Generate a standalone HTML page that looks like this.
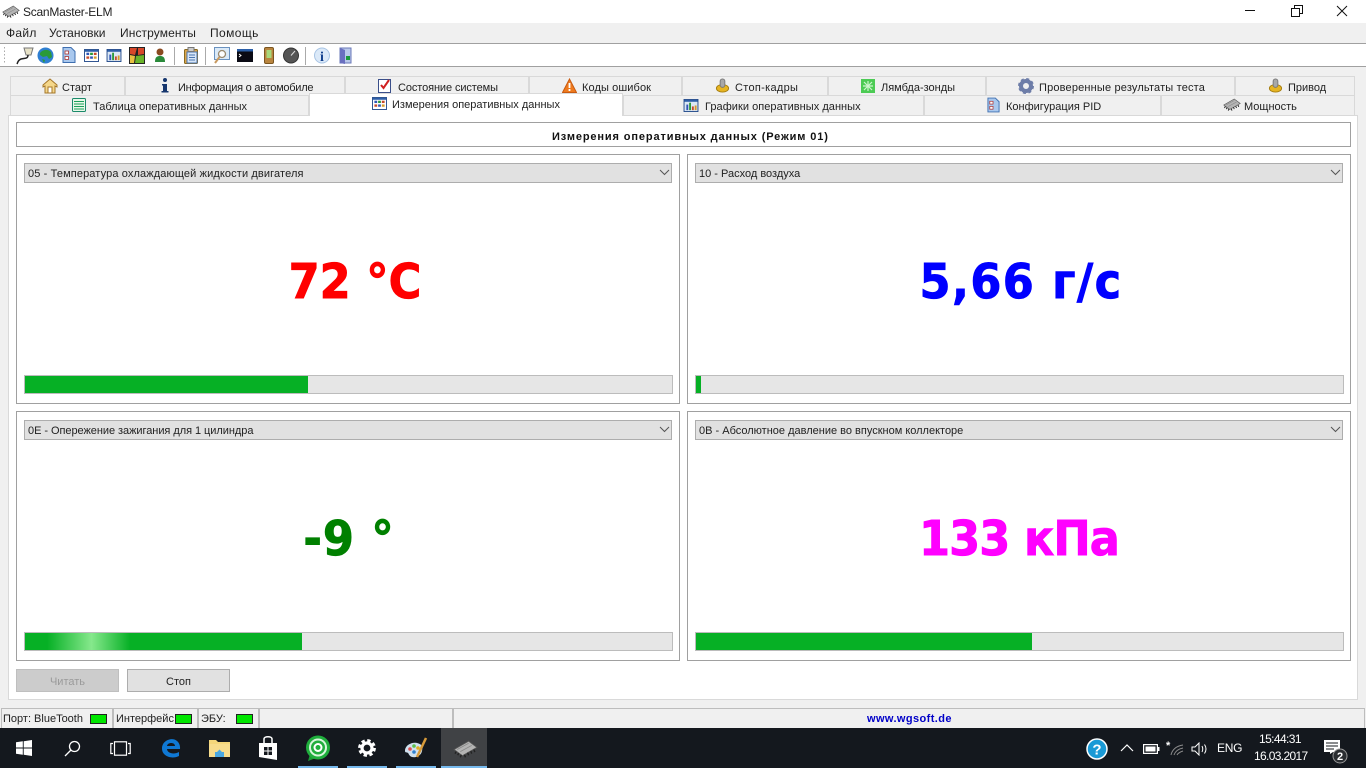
<!DOCTYPE html>
<html lang="ru">
<head>
<meta charset="utf-8">
<title>ScanMaster-ELM</title>
<style>
html,body{margin:0;padding:0;width:1366px;height:768px;overflow:hidden;background:#f0f0f0}
body{position:relative;font-family:"Liberation Sans","DejaVu Sans",sans-serif;font-size:11px;color:#222}
div,span,svg{position:absolute;box-sizing:border-box}
.t{white-space:nowrap;line-height:14px;height:14px}
.tab{background:#f0f0f0;border:1px solid #d9d9d9;border-bottom:none;height:20px}
.panel{background:#fff;border:1px solid #a0a0a0}
.combo{background:#e1e1e1;border:1px solid #adadad;height:20px}
.bar{background:#e6e6e6;border:1px solid #bcbcbc;height:19px}
.fill{background:#06b025;left:0;top:0;height:17px}
.big{font-family:"DejaVu Sans",sans-serif;font-weight:700;font-size:48px;line-height:56px;height:56px;width:300px;white-space:nowrap;text-align:center;transform:scaleX(.93);transform-origin:center;text-rendering:geometricPrecision;-webkit-text-stroke:.9px currentColor}
.sb{border:1px solid #bdbdbd;border-bottom:none;height:20px;top:708px}
.led{background:#00e600;border:1px solid #222;width:17px;height:10px;top:714px}
.ts{height:2px;top:766px;background:#76b9ed}
</style>
</head>
<body>
<svg width="0" height="0" style="left:0;top:0">
<defs>
<symbol id="chip" viewBox="0 0 24 18"><path d="M1 9 15 1l8 6-14 8z" fill="#b4b4b4" stroke="#555" stroke-width=".8"/><path d="M3 11l-1 2M5.500 12.500l-1 2M8 14l-1 2.500M11 14l1 2.500M14 12l1 2.500M17 10.500l1 2.500M20 9l1 2.500" stroke="#222" stroke-width="1.300" fill="none"/><path d="M4 9 15 3M7 11l11-6" stroke="#8a8a8a" stroke-width=".8"/></symbol>
<symbol id="grid" viewBox="0 0 16 14"><rect x=".5" y=".5" width="15" height="13" fill="#fff" stroke="#224a8a"/><rect x="1" y="1" width="14" height="2" fill="#2d5ea8"/><rect x="2.500" y="4" width="3" height="2.500" fill="#2f55b5"/><rect x="6.500" y="4" width="3" height="2.500" fill="#2c9a3a"/><rect x="10.500" y="4" width="3" height="2.500" fill="#c64a2a"/><rect x="2.500" y="8" width="3" height="2.500" fill="#c64a2a"/><rect x="6.500" y="8" width="3" height="2.500" fill="#2f55b5"/><rect x="10.500" y="8" width="3" height="2.500" fill="#d69a2a"/></symbol>
<symbol id="chart" viewBox="0 0 16 14"><rect x=".5" y=".5" width="15" height="13" fill="#dbe7f5" stroke="#224a8a"/><rect x="1" y="1" width="14" height="2" fill="#2d5ea8"/><rect x="3" y="6" width="2" height="6" fill="#2f55b5"/><rect x="6" y="4" width="2" height="8" fill="#2c9a3a"/><rect x="9" y="8" width="2" height="4" fill="#c64a2a"/><rect x="12" y="7" width="2" height="5" fill="#d69a2a"/></symbol>
<symbol id="doc" viewBox="0 0 14 16"><path d="M1 .5h8l4 4v11H1z" fill="#a9c8ee" stroke="#3f6fb0"/><rect x="3" y="4" width="3.500" height="3" fill="#fff" stroke="#a33" stroke-width=".8"/><rect x="3" y="9.500" width="3.500" height="3" fill="#fff" stroke="#a33" stroke-width=".8"/></symbol>
<symbol id="stick" viewBox="0 0 16 16"><ellipse cx="8" cy="11" rx="6.500" ry="4" fill="#e6b422" stroke="#a57d10"/><rect x="5.500" y="1" width="5" height="9" rx="2.500" fill="#a8a8a8" stroke="#777"/></symbol>
</defs>
</svg>

<!-- title bar -->
<div style="left:0;top:0;width:1366px;height:23px;background:#fff"></div>
<svg style="left:2px;top:5px" width="18" height="14"><use href="#chip"/></svg>
<div class="t" style="left:23px;top:5px;font-size:12px;letter-spacing:-.25px">ScanMaster-ELM</div>
<svg style="left:1240px;top:0" width="126" height="23" fill="none" stroke="#111" stroke-width="1"><path d="M5 10.500h10"/><path d="M51.500 8.500h8v8h-8zM54.500 8.500v-3h8v8h-3"/><path d="M97 6l10 10M107 6 97 16"/></svg>

<!-- menu -->
<div class="t" style="left:6px;top:26px;font-size:12px;letter-spacing:.3px">Файл</div>
<div class="t" style="left:49px;top:26px;font-size:12px;letter-spacing:0">Установки</div>
<div class="t" style="left:120px;top:26px;font-size:12px;letter-spacing:.1px">Инструменты</div>
<div class="t" style="left:210px;top:26px;font-size:12px;letter-spacing:.4px">Помощь</div>

<!-- toolbar -->
<div style="left:0;top:43px;width:1366px;height:24px;background:#fff;border-top:1px solid #a0a0a0;border-bottom:1px solid #a0a0a0"></div>
<svg style="left:3px;top:46px" width="3" height="19"><path d="M1.500 1v17" stroke="#aaa" stroke-dasharray="1.500 2"/></svg>
<svg style="left:14px;top:47px" width="20" height="18"><path d="M10 1h9l-2 7h-5z" fill="#e8e3c8" stroke="#777"/><path d="M14 8c0 4-3 3-7 4-3 1-3 3-4 5" fill="none" stroke="#222" stroke-width="1.500"/></svg>
<svg style="left:37px;top:47px" width="17" height="17"><circle cx="8.500" cy="8.500" r="8" fill="#2f7fd1"/><path d="M3 6c3-4 8-4 11-1l1 5-3 2-2-3-4 1-3-2zM5 12l3 1-1 3z" fill="#2a9a3a"/></svg>
<svg style="left:62px;top:47px" width="14" height="16"><use href="#doc"/></svg>
<svg style="left:84px;top:49px" width="15" height="13"><use href="#grid"/></svg>
<svg style="left:106px;top:49px" width="16" height="13"><use href="#chart"/></svg>
<svg style="left:129px;top:47px" width="16" height="17"><rect width="16" height="17" fill="#222"/><path d="M1 1h7l-2 7-5-1zM9 1h6v6l-6 1z" fill="#d8472a"/><path d="M1 8l5 1-1 7H1z" fill="#e8c040"/><path d="M7 9l8-1v8H6z" fill="#6ab42a"/></svg>
<svg style="left:154px;top:48px" width="12" height="15"><circle cx="6" cy="4" r="3.500" fill="#8a4a20"/><path d="M1 14c0-5 2-6 5-6s5 1 5 6z" fill="#2a8a3a"/></svg>
<div style="left:174px;top:47px;width:1px;height:18px;background:#aaa"></div>
<svg style="left:184px;top:47px" width="14" height="17"><rect x=".5" y="2.500" width="13" height="14" rx="1" fill="#dca64a" stroke="#8a6a20"/><rect x="3" y="5" width="10" height="11" fill="#d8e6f8" stroke="#4a76b0"/><rect x="4" y=".5" width="6" height="4" fill="#ccc" stroke="#777"/><path d="M5 8h6M5 10.500h6M5 13h6" stroke="#4a76b0"/></svg>
<div style="left:205px;top:47px;width:1px;height:18px;background:#aaa"></div>
<svg style="left:214px;top:47px" width="16" height="18"><rect x=".5" y=".5" width="15" height="12" fill="#dbeaf8" stroke="#6a92c0"/><circle cx="8" cy="7" r="3.500" fill="#fff" stroke="#9a8a70" stroke-width="1.300"/><path d="M5.500 10 1 16" stroke="#c89a60" stroke-width="2"/></svg>
<svg style="left:237px;top:49px" width="16" height="13"><rect width="16" height="13" fill="#0a0a14"/><rect width="16" height="2.500" fill="#2a5ea8"/><path d="M2 5l2 1.500L2 8" stroke="#fff" fill="none"/></svg>
<svg style="left:264px;top:47px" width="10" height="17"><rect x=".5" y=".5" width="9" height="16" rx="1.500" fill="#b9853f" stroke="#7a5520"/><rect x="2.500" y="3" width="5" height="8" fill="#a8d87a"/></svg>
<svg style="left:283px;top:47px" width="16" height="17"><circle cx="8" cy="8.500" r="7.500" fill="#555" stroke="#333"/><path d="M8 8.500 12 4" stroke="#ddd"/></svg>
<div style="left:305px;top:47px;width:1px;height:18px;background:#aaa"></div>
<svg style="left:314px;top:47px" width="16" height="17"><circle cx="8" cy="8.500" r="7.500" fill="#dbe9f8" stroke="#a8c4e4"/><text x="8" y="14" font-family="Liberation Serif,serif" font-weight="700" font-size="14" text-anchor="middle" fill="#13418f">i</text></svg>
<svg style="left:339px;top:47px" width="13" height="17"><rect x="1" y="1" width="11" height="15" fill="#b9c8ea" stroke="#6a78b8"/><path d="M1 1l5 2v14l-5-1z" fill="#6a70c0"/><rect x="7" y="9" width="4" height="4" fill="#1a9a3a"/></svg>

<!-- tabs -->
<div class="tab" style="left:10px;top:76px;width:115px"></div>
<div class="tab" style="left:125px;top:76px;width:220px"></div>
<div class="tab" style="left:345px;top:76px;width:184px"></div>
<div class="tab" style="left:529px;top:76px;width:153px"></div>
<div class="tab" style="left:682px;top:76px;width:146px"></div>
<div class="tab" style="left:828px;top:76px;width:158px"></div>
<div class="tab" style="left:986px;top:76px;width:249px"></div>
<div class="tab" style="left:1235px;top:76px;width:120px"></div>
<div class="tab" style="left:10px;top:95px;width:299px"></div>
<div class="tab" style="left:623px;top:95px;width:301px"></div>
<div class="tab" style="left:924px;top:95px;width:237px"></div>
<div class="tab" style="left:1161px;top:95px;width:194px"></div>
<!-- page -->
<div style="left:8px;top:115px;width:1350px;height:585px;background:#fff;border:1px solid #d9d9d9"></div>
<div style="left:309px;top:93px;width:314px;height:23px;background:#fff;border:1px solid #d9d9d9;border-bottom:none"></div>

<!-- tab labels -->
<svg style="left:42px;top:78px" width="16" height="16"><path d="M8 1 1 7v2l2-1v7h10V8l2 1V7z" fill="#f5d78a" stroke="#a5772a"/><rect x="6" y="9" width="4" height="6" fill="#fff" stroke="#a5772a"/></svg>
<div class="t" style="left:62px;top:81px">Старт</div>
<svg style="left:161px;top:78px" width="8" height="15"><circle cx="4" cy="2" r="2" fill="#16366e"/><path d="M1 6h5v7h1.500v1.500H.5V13H2V7.500H1z" fill="#16366e"/></svg>
<div class="t" style="left:178px;top:81px;letter-spacing:-.25px">Информация о автомобиле</div>
<svg style="left:378px;top:78px" width="13" height="15"><rect x=".5" y="1.500" width="12" height="13" fill="#fff" stroke="#3a4f8a"/><path d="M3 7l2.500 3L11 2" fill="none" stroke="#d02020" stroke-width="2"/></svg>
<div class="t" style="left:398px;top:81px;letter-spacing:-.1px">Состояние системы</div>
<svg style="left:562px;top:78px" width="15" height="15"><path d="M7.500 1 14.500 14.500H.5z" fill="#ee7a1e" stroke="#c85a10"/><path d="M7.500 5v5M7.500 11v2" stroke="#fff" stroke-width="1.800"/></svg>
<div class="t" style="left:582px;top:81px;letter-spacing:.1px">Коды ошибок</div>
<svg style="left:715px;top:78px" width="15" height="15"><use href="#stick"/></svg>
<div class="t" style="left:735px;top:81px;letter-spacing:.3px">Стоп-кадры</div>
<svg style="left:861px;top:79px" width="14" height="14"><rect width="14" height="14" fill="#4ccb54"/><path d="M3 3l8 8M11 3l-8 8M7 2v10M2 7h10" stroke="#cdf5cd" stroke-width="1.200"/></svg>
<div class="t" style="left:881px;top:81px">Лямбда-зонды</div>
<svg style="left:1018px;top:78px" width="16" height="16"><circle cx="8" cy="8" r="5" fill="none" stroke="#6d7da8" stroke-width="4"/><circle cx="8" cy="8" r="7" fill="none" stroke="#6d7da8" stroke-width="2" stroke-dasharray="3 2.500"/></svg>
<div class="t" style="left:1039px;top:81px;letter-spacing:.17px">Проверенные результаты теста</div>
<svg style="left:1268px;top:78px" width="15" height="15"><use href="#stick"/></svg>
<div class="t" style="left:1288px;top:81px">Привод</div>

<svg style="left:72px;top:98px" width="14" height="14"><rect x=".5" y=".5" width="13" height="13" rx="1" fill="#e8f8e8" stroke="#1a8a6a"/><path d="M2 3.500h10M2 6h10M2 8.500h10M2 11h10" stroke="#1aa05a"/></svg>
<div class="t" style="left:93px;top:100px">Таблица оперативных данных</div>
<svg style="left:372px;top:97px" width="15" height="13"><use href="#grid"/></svg>
<div class="t" style="left:392px;top:98px">Измерения оперативных данных</div>
<svg style="left:683px;top:99px" width="16" height="13"><use href="#chart"/></svg>
<div class="t" style="left:705px;top:100px;letter-spacing:.04px">Графики оперативных данных</div>
<svg style="left:987px;top:97px" width="13" height="16"><use href="#doc"/></svg>
<div class="t" style="left:1006px;top:100px">Конфигурация PID</div>
<svg style="left:1223px;top:98px" width="18" height="14"><use href="#chip"/></svg>
<div class="t" style="left:1244px;top:100px">Мощность</div>

<!-- heading -->
<div style="left:16px;top:122px;width:1335px;height:25px;background:#fff;border:1px solid #a0a0a0"></div>
<div class="t" style="left:552px;top:130px;font-weight:700;color:#111;letter-spacing:.87px">Измерения оперативных данных (Режим 01)</div>

<!-- panel 1 -->
<div class="panel" style="left:16px;top:154px;width:664px;height:250px"></div>
<div class="combo" style="left:24px;top:163px;width:648px"></div>
<div class="t" style="left:28px;top:167px;letter-spacing:.12px">05 - Температура охлаждающей жидкости двигателя</div>
<svg style="left:659px;top:169px" width="11" height="7"><path d="M1 1l4.500 4.500L10 1" fill="none" stroke="#555"/></svg>
<div class="big" style="left:205px;top:254px;color:#f00">72 °C</div>
<div class="bar" style="left:24px;top:375px;width:649px"><div class="fill" style="width:283px"></div></div>

<!-- panel 2 -->
<div class="panel" style="left:687px;top:154px;width:664px;height:250px"></div>
<div class="combo" style="left:695px;top:163px;width:648px"></div>
<div class="t" style="left:699px;top:167px">10 - Расход воздуха</div>
<svg style="left:1330px;top:169px" width="11" height="7"><path d="M1 1l4.500 4.500L10 1" fill="none" stroke="#555"/></svg>
<div class="big" style="left:871px;top:254px;color:#00f;letter-spacing:1.5px">5,66 г/с</div>
<div class="bar" style="left:695px;top:375px;width:649px"><div class="fill" style="width:5px"></div></div>

<!-- panel 3 -->
<div class="panel" style="left:16px;top:411px;width:664px;height:250px"></div>
<div class="combo" style="left:24px;top:420px;width:648px"></div>
<div class="t" style="left:28px;top:424px;letter-spacing:-.05px">0E - Опережение зажигания для 1 цилиндра</div>
<svg style="left:659px;top:426px" width="11" height="7"><path d="M1 1l4.500 4.500L10 1" fill="none" stroke="#555"/></svg>
<div class="big" style="left:199px;top:511px;color:#008000;letter-spacing:1px">-9 °</div>
<div class="bar" style="left:24px;top:632px;width:649px"><div class="fill" style="width:277px;background:linear-gradient(90deg,#06b025 8%,#86e88c 24%,#06b025 38%)"></div></div>

<!-- panel 4 -->
<div class="panel" style="left:687px;top:411px;width:664px;height:250px"></div>
<div class="combo" style="left:695px;top:420px;width:648px"></div>
<div class="t" style="left:699px;top:424px">0B - Абсолютное давление во впускном коллекторе</div>
<svg style="left:1330px;top:426px" width="11" height="7"><path d="M1 1l4.500 4.500L10 1" fill="none" stroke="#555"/></svg>
<div class="big" style="left:869px;top:511px;color:#f0f;letter-spacing:-1px">133 кПа</div>
<div class="bar" style="left:695px;top:632px;width:649px"><div class="fill" style="width:336px"></div></div>

<!-- buttons -->
<div style="left:16px;top:669px;width:103px;height:23px;background:#ccc;border:1px solid #bfbfbf"></div>
<div class="t" style="left:16px;top:675px;width:103px;text-align:center;color:#9a9a9a">Читать</div>
<div style="left:127px;top:669px;width:103px;height:23px;background:#e1e1e1;border:1px solid #adadad"></div>
<div class="t" style="left:127px;top:675px;width:103px;text-align:center">Стоп</div>

<!-- status bar -->
<div class="sb" style="left:1px;width:112px"></div>
<div class="t" style="left:3px;top:712px">Порт: BlueTooth</div>
<div class="led" style="left:90px"></div>
<div class="sb" style="left:113px;width:85px"></div>
<div class="t" style="left:116px;top:712px;width:60px;overflow:hidden">Интерфейс:</div>
<div class="led" style="left:175px"></div>
<div class="sb" style="left:198px;width:61px"></div>
<div class="t" style="left:201px;top:712px">ЭБУ:</div>
<div class="led" style="left:236px"></div>
<div class="sb" style="left:259px;width:194px"></div>
<div class="sb" style="left:453px;width:912px"></div>
<div class="t" style="left:867px;top:712px;font-weight:700;color:#0000c8;letter-spacing:.4px">www.wgsoft.de</div>

<!-- taskbar -->
<div style="left:0;top:728px;width:1366px;height:40px;background:#14181e"></div>
<div style="left:441px;top:728px;width:46px;height:40px;background:#404245"></div>
<svg style="left:16px;top:740px" width="16" height="16" fill="#fff"><path d="M0 2.300 6.800 1.300V7.500H0zM7.700 1.200 16 0V7.500H7.700zM0 8.500H6.800V14.700L0 13.700zM7.700 8.500H16V16L7.700 14.800z"/></svg>
<svg style="left:64px;top:740px" width="17" height="17" fill="none" stroke="#fff" stroke-width="1.300"><circle cx="10.500" cy="6.500" r="5"/><path d="M7 10 1 16"/></svg>
<svg style="left:110px;top:741px" width="21" height="15" fill="none" stroke="#fff" stroke-width="1.200"><rect x="4.500" y=".8" width="12" height="13.400"/><path d="M3 2.500H.8v10H3M18 2.500h2.200v10H18"/></svg>
<svg style="left:161px;top:738px" width="20" height="20"><path d="M19 11H6c.3 4 6.500 6 12 3v4c-7 3.500-17 .5-17-7.500C1 3 9 0 13.500 1.500 17.500 3 19.500 7 19 11zM6 8h8c0-4-7.500-4-8 0z" fill="#0f78d4"/></svg>
<svg style="left:209px;top:739px" width="21" height="19"><path d="M0 1h7l2 2h12v15H0z" fill="#f4d67a"/><rect y="5" width="21" height="13" fill="#f7dc8c"/><path d="M6 18v-5h2l2.500-2.500L13 13h2v5z" fill="#4aa7e0"/></svg>
<svg style="left:258px;top:736px" width="20" height="24"><path d="M1 7h18v17L1 21z" fill="#fff"/><path d="M6 7V3c0-3 8-3 8 0v4" fill="none" stroke="#fff" stroke-width="1.500"/><path d="M6 11h3.500v3.500H6zM10.500 11H14v3.500h-3.500zM6 15.500h3.500V19H6zM10.500 15.500H14V19h-3.500z" fill="#14181e"/></svg>
<svg style="left:305px;top:735px" width="26" height="27"><path d="M5 19 3 26l8-3z" fill="#1a9a34"/><circle cx="13" cy="12.500" r="12" fill="#1fae3c"/><circle cx="13" cy="12.500" r="8" fill="none" stroke="#d8f5dc" stroke-width="2"/><circle cx="13" cy="12.500" r="3.500" fill="none" stroke="#fff" stroke-width="2"/></svg>
<svg style="left:358px;top:739px" width="18" height="18"><circle cx="9" cy="9" r="5" fill="none" stroke="#fff" stroke-width="3.200"/><circle cx="9" cy="9" r="7.600" fill="none" stroke="#fff" stroke-width="2.600" stroke-dasharray="3.400 2.570"/></svg>
<svg style="left:404px;top:736px" width="25" height="24"><path d="M1 15C1 9 8 6 13 7c5 1 6 4 5 8-1 5-6 7-10 6-3-1-3-3-4-4s-3 0-3-2z" fill="#cfe0ee"/><circle cx="6" cy="13" r="1.800" fill="#e05050"/><circle cx="10" cy="10" r="1.800" fill="#5cbf4a"/><circle cx="14" cy="12" r="1.800" fill="#e0b020"/><circle cx="10" cy="16" r="1.800" fill="#2f80d0"/><path d="M13 21 22 2" stroke="#d79a3a" stroke-width="2.500"/></svg>
<svg style="left:453px;top:740px" width="25" height="19"><use href="#chip"/></svg>
<div class="ts" style="left:298px;width:40px"></div>
<div class="ts" style="left:347px;width:40px"></div>
<div class="ts" style="left:396px;width:40px"></div>
<div class="ts" style="left:441px;width:46px"></div>

<!-- tray -->
<svg style="left:1086px;top:738px" width="22" height="22"><circle cx="11" cy="11" r="10" fill="#1a9ad6" stroke="#fff" stroke-width="1.500"/><text x="11" y="16.500" font-family="Liberation Sans,sans-serif" font-weight="700" font-size="15" text-anchor="middle" fill="#fff">?</text></svg>
<svg style="left:1120px;top:743px" width="14" height="9"><path d="M1 8l6-6 6 6" fill="none" stroke="#fff" stroke-width="1.200"/></svg>
<svg style="left:1143px;top:744px" width="17" height="10"><rect x=".6" y=".6" width="13.800" height="8.800" fill="none" stroke="#fff" stroke-width="1.200"/><rect x="2.500" y="2.500" width="10" height="5" fill="#fff"/><rect x="15" y="3" width="1.500" height="4" fill="#fff"/></svg>
<div class="t" style="left:1166px;top:739px;color:#fff;font-size:11px;font-weight:700">*</div>
<svg style="left:1170px;top:744px" width="14" height="12" fill="none" stroke="#8c8c8c"><path d="M1 11C2 6 6 2 13 1M4 11c1-3 4-6 9-7M7 11c1-2 3-3 6-4"/></svg>
<svg style="left:1191px;top:742px" width="17" height="14" fill="none" stroke="#fff"><path d="M1 5h3l4-4v12L4 9H1zM11 4c1 2 1 4 0 6M13.500 2.500c2 3 2 6 0 9"/></svg>
<div class="t" style="left:1217px;top:741px;color:#fff;font-size:12px;letter-spacing:-.3px">ENG</div>
<div class="t" style="left:1259px;top:732px;color:#fff;font-size:12px;letter-spacing:-.6px">15:44:31</div>
<div class="t" style="left:1254px;top:749px;color:#fff;font-size:12px;letter-spacing:-.65px">16.03.2017</div>
<svg style="left:1324px;top:740px" width="16" height="14"><path d="M0 0h16v12H9l-3 2v-2H0z" fill="#fff"/><path d="M2 3h12M2 6h12M2 9h8" stroke="#14181e"/></svg>
<svg style="left:1332px;top:748px" width="16" height="16"><circle cx="8" cy="8" r="7" fill="#2a2d31" stroke="#999"/><text x="8" y="12" font-family="Liberation Sans,sans-serif" font-weight="700" font-size="11" text-anchor="middle" fill="#fff">2</text></svg>
</body>
</html>
